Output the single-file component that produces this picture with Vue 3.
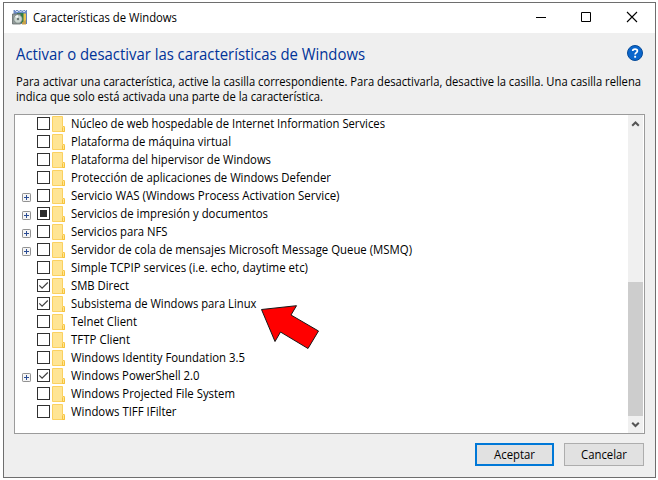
<script setup>
const features = [
  { name: 'Núcleo de web hospedable de Internet Information Services', width: 314 },
  { name: 'Plataforma de máquina virtual', width: 160 },
  { name: 'Plataforma del hipervisor de Windows', width: 200 },
  { name: 'Protección de aplicaciones de Windows Defender', width: 260 },
  { name: 'Servicio WAS (Windows Process Activation Service)', width: 268.5, expandable: true },
  { name: 'Servicios de impresión y documentos', width: 197, expandable: true, state: 'partial' },
  { name: 'Servicios para NFS', width: 96.5, expandable: true },
  { name: 'Servidor de cola de mensajes Microsoft Message Queue (MSMQ)', width: 341, expandable: true },
  { name: 'Simple TCPIP services (i.e. echo, daytime etc)', width: 237 },
  { name: 'SMB Direct', width: 58, state: 'checked' },
  { name: 'Subsistema de Windows para Linux', width: 185.5, state: 'checked' },
  { name: 'Telnet Client', width: 66 },
  { name: 'TFTP Client', width: 59 },
  { name: 'Windows Identity Foundation 3.5', width: 174 },
  { name: 'Windows PowerShell 2.0', width: 128.5, expandable: true, state: 'checked' },
  { name: 'Windows Projected File System', width: 164 },
  { name: 'Windows TIFF IFilter', width: 105.5 },
]
</script>

<template>
  <div class="screen">
    <main class="window">
      <header class="titlebar">
        <svg class="app-icon" width="16" height="16" viewBox="0 0 16 16">
          <path d="M1.500 1h13.500v4H1.500z" fill="#6d8cc6" />
          <path d="M3 1l2 2 2-2 1.500 2 2-2 1.500 2 2-2" fill="none" stroke="#d3dff2" />
          <path d="M9 4h6v11H9z" fill="#5f7fb8" />
          <path d="M9.500 4.500h4.500v9.500H9.500z" fill="#e9c34f" />
          <path d="M5 4h6.500v10H5z" fill="#2f7d4a" />
          <path d="M.5 5h8v10h-8z" fill="#929a9a" stroke="#626b6a" stroke-width=".8" />
          <circle cx="6" cy="10" r="4.200" fill="#cbd5d0" stroke="#71807a" stroke-width=".7" />
          <path d="M6 10L3 7.500a4 4 0 0 1 3-1.500z" fill="#f3f7f4" />
          <circle cx="6" cy="10" r="1.200" fill="#6d7975" />
          <path d="M10 13.500l4-2.500v4.500h-4z" fill="#c9a04a" />
        </svg>
        <svg class="title" width="200" height="20">
          <text x="0" y="14" textLength="144" lengthAdjust="spacingAndGlyphs">Características de Windows</text>
        </svg>
        <svg class="controls" width="106" height="16" viewBox="0 0 106 16" fill="none" stroke="#000">
          <path d="M1 8.500h10M46.500 3.500h9v9h-9z" />
          <path d="M92 3l10 10M102 3L92 13" stroke-width="1.100" />
        </svg>
      </header>

      <section class="intro">
        <svg class="heading" width="500" height="26">
          <text x="0" y="18" textLength="349" lengthAdjust="spacingAndGlyphs">Activar o desactivar las características de Windows</text>
        </svg>
        <svg class="help" width="16" height="16" viewBox="0 0 16 16">
          <circle cx="8" cy="8" r="7.500" fill="#0a66cc" stroke="#064a98" />
          <path d="M5.700 6.100C5.700 3.500 10.400 3.600 10.400 6C10.400 7.700 8.100 7.700 8.100 9.600" fill="none" stroke="#fff" stroke-width="1.700" />
          <path d="M7.200 10.800h1.900v1.900H7.200z" fill="#fff" />
        </svg>
      </section>
      <svg class="description" width="630" height="34">
        <text x="0" y="11" textLength="625" lengthAdjust="spacingAndGlyphs">Para activar una característica, active la casilla correspondiente. Para desactivarla, desactive la casilla. Una casilla rellena</text>
        <text x="0" y="26" textLength="307" lengthAdjust="spacingAndGlyphs">indica que solo está activada una parte de la característica.</text>
      </svg>

      <section class="list">
        <ul class="rows">
          <li v-for="f in features" :key="f.name" class="row">
            <span class="expander">
              <svg v-if="f.expandable" width="9" height="9" viewBox="0 0 9 9">
                <rect x=".5" y=".5" width="8" height="8" rx=".7" fill="#f5f5f5" stroke="#929292" />
                <path d="M2 4.500h5M4.500 2v5" stroke="#2c4d94" />
              </svg>
            </span>
            <svg class="check" width="13" height="13" viewBox="0 0 13 13">
              <rect x=".5" y=".5" width="12" height="12" fill="#fff" stroke="#303030" />
              <rect v-if="f.state === 'partial'" x="3" y="3" width="7" height="7" fill="#2b2b2b" />
              <path v-if="f.state === 'checked'" d="M2.300 6.300l2.800 2.900 5.700-5.700" fill="none" stroke="#404040" stroke-width="1.200" />
            </svg>
            <svg class="folder" width="13" height="16" viewBox="0 0 13 16">
              <path d="M.5.5h10v10h2v5H.5z" fill="#ffe594" stroke="#fbd160" />
              <path d="M10.500 15.500V11.500l1-1 1 1v4z" fill="#ffe594" stroke="#f6c23b" />
            </svg>
            <svg class="label" width="380" height="18">
              <text x="0" y="13" :textLength="f.width" lengthAdjust="spacingAndGlyphs">{{ f.name }}</text>
            </svg>
          </li>
        </ul>
        <div class="scrollbar">
          <svg class="arrow" width="15" height="17" viewBox="0 0 15 17">
            <path d="M4.200 10.800L7.500 7.500l3.300 3.300" fill="none" stroke="#555" stroke-width="2" />
          </svg>
          <div class="thumb"></div>
          <svg class="arrow" width="15" height="17" viewBox="0 0 15 17">
            <path d="M4.200 6.700L7.500 10l3.300-3.300" fill="none" stroke="#555" stroke-width="2" />
          </svg>
        </div>
      </section>

      <footer class="actions">
        <button class="button primary">
          <svg width="42" height="18"><text x="0" y="13" textLength="41" lengthAdjust="spacingAndGlyphs">Aceptar</text></svg>
        </button>
        <button class="button">
          <svg width="47" height="18"><text x="0" y="13" textLength="46" lengthAdjust="spacingAndGlyphs">Cancelar</text></svg>
        </button>
      </footer>
    </main>

    <svg class="pointer" width="60" height="46" viewBox="0 0 60 46">
      <path d="M1.500 4.500L36.500 .700L31 10L58.500 26L48 43.500L20.500 27L15 36.500z" fill="#f00" stroke="#171717" stroke-linejoin="miter" />
    </svg>
  </div>
</template>

<style>
body {
  background: #fff;
}
</style>

<style scoped>
.screen {
  position: relative;
  box-sizing: border-box;
  width: 658px;
  height: 480px;
  padding: 2px 2px 2px 3px;
  overflow: hidden;
  font: 12px 'Open Sans', 'Noto Sans', sans-serif;
}
svg {
  display: block;
  flex: none;
  overflow: visible;
}
.window {
  box-sizing: border-box;
  width: 653px;
  height: 476px;
  background: #efefef;
  border: 1px solid #6e6e6e;
}
.titlebar {
  display: flex;
  align-items: flex-start;
  height: 30px;
  background: #fff;
}
.app-icon {
  margin: 6px 0 0 8px;
}
.title {
  margin: 5px 0 0 5px;
}
.controls {
  margin: 6px 14px 0 auto;
}
.intro {
  display: flex;
  height: 42px;
  padding-left: 12px;
}
.heading {
  margin-top: 9px;
  font-size: 16px;
  fill: #003399;
}
.help {
  margin: 12px 12px 0 auto;
}
.description {
  margin-left: 12px;
}
.list {
  box-sizing: border-box;
  display: flex;
  justify-content: space-between;
  width: 631px;
  height: 320px;
  margin: 5px 0 0 10px;
  padding-right: 1px;
  background: #fff;
  border: 1px solid #9b9b9b;
}
.rows {
  margin: 0;
  padding: 0 0 0 7px;
  list-style: none;
}
.row {
  display: flex;
  align-items: flex-start;
  height: 18px;
}
.expander {
  width: 15px;
  padding-top: 6px;
}
.check {
  margin-top: 2px;
}
.folder {
  margin: 1px 6px 0 2px;
}
.scrollbar {
  display: flex;
  flex-direction: column;
  justify-content: space-between;
  width: 15px;
  background: #f0f0f0;
}
.thumb {
  height: 134px;
  margin-top: auto;
  background: #cdcdcd;
}
.actions {
  display: flex;
  justify-content: flex-end;
  gap: 10px;
  margin: 9px 11px 0 0;
}
.button {
  box-sizing: border-box;
  display: flex;
  align-items: center;
  justify-content: center;
  width: 80px;
  height: 23px;
  padding: 0;
  font: inherit;
  background: #e1e1e1;
  border: 1px solid #adadad;
}
.primary {
  width: 79px;
  border: 2px solid #0078d7;
}
.pointer {
  position: absolute;
  left: 260px;
  top: 305px;
}
</style>
